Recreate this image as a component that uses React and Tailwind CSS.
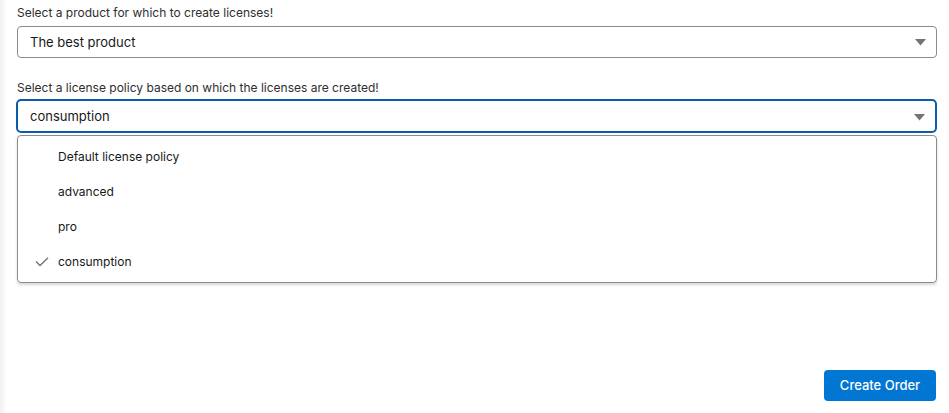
import { useState } from 'react';

const policies = ['Default license policy', 'advanced', 'pro', 'consumption'];

function Caret() {
  return (
    <svg width="11" height="7" viewBox="0 0 11 7" className="shrink-0">
      <path d="M0 0 L11 0 L5.5 6.5 Z" fill="#747474" />
    </svg>
  );
}

function Check() {
  return (
    <svg width="14" height="10" viewBox="0 0 14 10" fill="none">
      <path d="M1 4.5 L5 8.5 L13 0.8" stroke="#747474" strokeWidth="1.4" />
    </svg>
  );
}

export default function App() {
  const [policy, setPolicy] = useState('consumption');

  return (
    <div
      className="relative h-[413px] w-[949px] bg-white text-[#181818] flex flex-col pl-[17px] pr-[12px]"
      style={{ fontFamily: 'Inter, "Noto Sans", sans-serif' }}
    >
      <div className="absolute left-0 top-0 h-full w-[7px] bg-gradient-to-r from-[#f1f1f1] to-white" />

      <label className="mt-[4px] text-[12px] leading-[18px] text-[#2e2e2e]">
        Select a product for which to create licenses!
      </label>
      <div className="mt-[4px] h-[32px] flex items-center justify-between rounded-[4px] border border-[#8c8c8c] pl-[12px] pr-[10px] pt-[1px] text-[13px]">
        <span>The best product</span>
        <Caret />
      </div>

      <label className="mt-[21px] text-[12px] leading-[18px] text-[#2e2e2e]">
        Select a license policy based on which the licenses are created!
      </label>
      <div className="mt-[2px] h-[34px] -ml-[1px] flex items-center justify-between rounded-[5px] border-2 border-[#0b5cab] pl-[12px] pr-[10px] pt-[2px] text-[13px]">
        <span>{policy}</span>
        <Caret />
      </div>

      <div className="mt-[2px] rounded-[4px] border border-[#8c8c8c] py-[3px] shadow-[0_2px_3px_rgba(0,0,0,0.16)]">
        {policies.map((p) => (
          <div
            key={p}
            onClick={() => setPolicy(p)}
            className="h-[35px] flex items-center text-[12px] cursor-pointer"
          >
            <div className="w-[40px] pl-[17px] flex items-center">
              {policy === p && <Check />}
            </div>
            <span>{p}</span>
          </div>
        ))}
      </div>

      <div className="mt-auto mb-[12px] flex justify-end pr-[1px]">
        <button className="h-[31px] w-[112px] rounded-[4px] bg-[#0176d3] text-white text-[13px] font-medium">
          Create Order
        </button>
      </div>
    </div>
  );
}
